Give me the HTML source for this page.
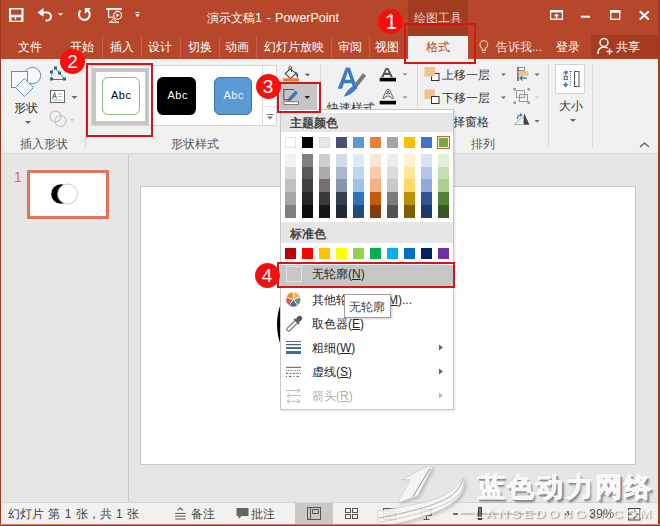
<!DOCTYPE html>
<html><head><meta charset="utf-8">
<style>
*{margin:0;padding:0;box-sizing:border-box}
html,body{width:660px;height:526px;overflow:hidden}
body{position:relative;background:#E6E6E6;font-family:"Liberation Sans",sans-serif;font-size:12px;color:#444}
.a{position:absolute}
svg{position:absolute;overflow:visible}
.t{position:absolute;white-space:nowrap;line-height:1}
.tab{position:absolute;top:41px;color:#fff;font-size:12px;line-height:12px;white-space:nowrap}
.sep{position:absolute;top:36px;width:1px;height:22px;background:#C4614A}
.gsep{position:absolute;top:64px;width:1px;height:84px;background:#DADADA}
.glabel{position:absolute;top:138px;font-size:12px;line-height:12px;color:#555;white-space:nowrap}
.dd{position:absolute;width:0;height:0;border-left:3px solid transparent;border-right:3px solid transparent;border-top:3px solid #666}
.badge{position:absolute;width:25px;height:25px;border-radius:50%;background:#F50F0F;color:#fff;font-size:19px;line-height:26px;text-align:center}
.redbox{position:absolute;border:2px solid #D7141A}
.sw{position:absolute;width:11px;height:11px}
.mi{position:absolute;left:312px;font-size:12px;line-height:12px;color:#262626;white-space:nowrap}
.u{text-decoration:underline}
</style></head><body>

<!-- ============ TITLE BAR ============ -->
<div class="a" style="left:0;top:0;width:660px;height:59px;background:#B7472A"></div>
<div class="a" style="left:408px;top:0;width:60px;height:36px;background:#A13B21"></div>
<div class="t" style="left:414px;top:12px;color:#F0D0C8;font-size:12px">绘图工具</div>
<div class="t" style="left:207px;top:12px;color:#fff;font-size:12px">演示文稿<span style="font-size:12.5px;word-spacing:1px">1 - PowerPoint</span></div>

<!-- QAT icons -->
<svg style="left:0;top:0" width="150" height="36">
  <!-- save -->
  <rect x="9" y="8" width="14.5" height="14" fill="#fff"/>
  <rect x="11" y="9.5" width="10.5" height="5.2" fill="#B7472A"/>
  <rect x="11.5" y="17.3" width="9.5" height="3.4" fill="#B7472A"/>
  <rect x="14.8" y="17.3" width="1.4" height="2.2" fill="#fff"/>
  <!-- undo -->
  <path d="M41.5 12.5 H47 A4 4 0 0 1 47 20.5 H45.5" fill="none" stroke="#fff" stroke-width="2.1"/>
  <path d="M37.5 12.4 L43.5 8 L43.5 16.8 Z" fill="#fff"/>
  <path d="M58 13.3 L63 13.3 L60.5 15.8 Z" fill="#fff"/>
  <!-- repeat -->
  <path d="M80.6 10.6 A5.4 5.4 0 1 0 87.3 10" fill="none" stroke="#fff" stroke-width="2.1"/>
  <path d="M84.8 8.1 L91 8.1 L84.8 14 Z" fill="#fff"/>
  <!-- present -->
  <rect x="106" y="8" width="16" height="1.8" fill="#fff"/>
  <rect x="107.9" y="9" width="1.3" height="8.5" fill="#fff"/>
  <path d="M108 17.2 H113" stroke="#fff" stroke-width="1.1"/>
  <circle cx="117.6" cy="15.3" r="3.9" fill="none" stroke="#fff" stroke-width="1.1"/>
  <path d="M116.3 13.3 L119.6 15.3 L116.3 17.3 Z" fill="#fff"/>
  <path d="M111 21.3 L113.5 18.6 L116 21.3" fill="none" stroke="#fff" stroke-width="1"/>
  <rect x="109" y="21.6" width="10" height="1.3" fill="#fff"/>
  <!-- customize -->
  <path d="M135.5 12.5 H139.5" stroke="#fff" stroke-width="1"/>
  <path d="M135.3 14.2 L139.7 14.2 L137.5 17.3 Z" fill="#fff"/>
</svg>

<!-- window controls -->
<svg style="left:540px;top:0" width="120" height="36">
  <g fill="none" stroke="#fff" stroke-width="1.3">
    <rect x="10.6" y="10.8" width="11.8" height="8.4"/>
  </g>
  <rect x="10" y="10.2" width="13" height="2.2" fill="#fff"/>
  <path d="M16.5 18.8 V15.5" stroke="#fff" stroke-width="1.3"/>
  <path d="M13.8 16.2 L16.5 13.5 L19.2 16.2 Z" fill="#fff"/>
  <path d="M40.8 16.7 H50" stroke="#fff" stroke-width="2"/>
  <rect x="70.7" y="11" width="9" height="8.3" fill="none" stroke="#fff" stroke-width="1.4"/>
  <rect x="70" y="10.3" width="10.4" height="2.4" fill="#fff"/>
  <path d="M99.8 11.2 L108.8 19.4 M108.8 11.2 L99.8 19.4" stroke="#fff" stroke-width="2"/>
</svg>

<!-- ============ TABS ============ -->
<div class="tab" style="left:18px">文件</div>
<div class="sep" style="left:102px"></div>
<div class="tab" style="left:70px">开始</div>
<div class="tab" style="left:110px">插入</div>
<div class="sep" style="left:141px"></div>
<div class="tab" style="left:148px">设计</div>
<div class="sep" style="left:180px"></div>
<div class="tab" style="left:188px">切换</div>
<div class="sep" style="left:219px"></div>
<div class="tab" style="left:225px">动画</div>
<div class="sep" style="left:256px"></div>
<div class="tab" style="left:264px">幻灯片放映</div>
<div class="sep" style="left:331px"></div>
<div class="tab" style="left:338px">审阅</div>
<div class="sep" style="left:369px"></div>
<div class="tab" style="left:375px">视图</div>
<div class="a" style="left:408px;top:36px;width:60px;height:24px;background:#F1F1F1"></div>
<div class="tab" style="left:426px;color:#B7472A">格式</div>
<svg style="left:478px;top:38px" width="16" height="18">
  <path d="M4.3 12.3 V10.6 C2.6 9.6 1.9 8.2 1.9 6.6 A3.9 3.9 0 0 1 9.7 6.6 C9.7 8.2 9 9.6 7.3 10.6 V12.3 Z" fill="none" stroke="#F2C2AE" stroke-width="1.2"/>
  <path d="M4.3 14.5 H7.3" stroke="#F2C2AE" stroke-width="1.3"/>
</svg>
<div class="tab" style="left:496px;color:#F6E1DB">告诉我...</div>
<div class="tab" style="left:556px">登录</div>
<div class="a" style="left:591px;top:35px;width:68px;height:23px;background:#A53C22"></div>
<svg style="left:596px;top:36px" width="18" height="20">
  <circle cx="8" cy="6.5" r="4" fill="none" stroke="#fff" stroke-width="1.4"/>
  <path d="M2 18 C2 13.5 4.5 11 8 11 C9.5 11 10.5 11.5 11.5 12" fill="none" stroke="#fff" stroke-width="1.4"/>
  <path d="M13.5 12.5 V18.5 M10.5 15.5 H16.5" stroke="#fff" stroke-width="1.4"/>
</svg>
<div class="tab" style="left:616px">共享</div>

<!-- ============ RIBBON ============ -->
<div class="a" style="left:0;top:59px;width:660px;height:95px;background:#F1F1F1;border-bottom:1px solid #D5D5D5"></div>
<div class="gsep" style="left:85px"></div>
<div class="gsep" style="left:320px"></div>
<div class="gsep" style="left:417px"></div>
<div class="gsep" style="left:548px"></div>
<div class="gsep" style="left:592px"></div>

<!-- insert shapes group -->
<svg style="left:0;top:59px" width="85" height="80">
  <g fill="#F6F8FB" stroke="#6C8CAE" stroke-width="1">
    <circle cx="32.5" cy="16.5" r="8.2"/>
    <rect x="11.5" y="12.5" width="16" height="16"/>
    <path d="M24.5 19.5 L33.5 28.5 L24.5 37.5 L15.5 28.5 Z"/>
  </g>
  <!-- edit shape -->
  <path d="M55.5 9.5 L51.5 13 L51.5 20" fill="none" stroke="#3D7B88" stroke-width="1" stroke-dasharray="1.3 1.3"/>
  <path d="M51.5 20.5 H64.5" fill="none" stroke="#3D7B88" stroke-width="1"/>
  <path d="M55.5 9.5 L59.5 14 L64.5 20" fill="none" stroke="#3D7B88" stroke-width="1"/>
  <g fill="#2D6A78">
    <rect x="54" y="7.5" width="3" height="3"/><rect x="50" y="11.5" width="3" height="3"/>
    <rect x="50" y="18.5" width="3" height="3"/><rect x="58" y="12.5" width="3" height="3"/>
    <rect x="63" y="18.5" width="3" height="3"/>
  </g>
  <!-- text box -->
  <rect x="50.5" y="31.5" width="14" height="12" fill="#fff" stroke="#666" stroke-width="1"/>
  <path d="M52.5 39.5 L54.5 34 L56.5 39.5 M53.3 37.5 H55.7" fill="none" stroke="#5A7490" stroke-width="1.1"/>
  <path d="M57.5 35 H62.5 M57.5 37.5 H62.5 M52.5 41 H62.5" stroke="#9AA" stroke-width="0.8"/>
  <path d="M71.5 37 L77.5 37 L74.5 40 Z" fill="#666"/>
  <!-- merge -->
  <g fill="none" stroke="#BDBDBD" stroke-width="1.1">
    <circle cx="55.5" cy="57.5" r="5.5"/><circle cx="60.5" cy="62" r="5.5"/>
  </g>
  <path d="M69.5 60 L74.5 60 L72 62.5 Z" fill="#C8C8C8"/>
</svg>
<div class="t" style="left:14px;top:102px;font-size:12px;color:#333">形状</div>
<div class="dd" style="left:24.5px;top:121px"></div>
<div class="glabel" style="left:20px">插入形状</div>

<!-- gallery -->
<div class="a" style="left:91px;top:65px;width:186px;height:61px;background:#fff;border:1px solid #D4D4D4"></div>
<div class="a" style="left:92px;top:68px;width:57px;height:57px;border:4px solid #C6C6C6"></div>
<div class="a" style="left:102px;top:77px;width:38px;height:38px;border:1px solid #8DB573;border-radius:6px;background:#fff"></div>
<div class="t" style="left:111px;top:89.5px;font-size:11px;letter-spacing:0.5px;color:#000">Abc</div>
<div class="a" style="left:157px;top:77px;width:39px;height:38px;border-radius:6px;background:#000"></div>
<div class="t" style="left:167.5px;top:89.5px;font-size:11px;letter-spacing:0.5px;color:#fff">Abc</div>
<div class="a" style="left:214px;top:77px;width:38px;height:38px;border-radius:6px;background:#5B9BD5;border:1px solid #41719C"></div>
<div class="t" style="left:223.5px;top:89.5px;font-size:11px;letter-spacing:0.5px;color:#F0F6FC">Abc</div>
<div class="a" style="left:262px;top:66px;width:1px;height:59px;background:#DADADA"></div>
<div class="a" style="left:263px;top:106px;width:13px;height:1px;background:#E4E4E4"></div>
<svg style="left:263px;top:106px" width="14" height="20">
  <path d="M3.5 8.5 H10.5" stroke="#777" stroke-width="1"/>
  <path d="M4 10.5 L10 10.5 L7 13.5 Z" fill="#777"/>
</svg>
<div class="glabel" style="left:171px">形状样式</div>

<!-- fill / outline buttons -->
<svg style="left:280px;top:62px" width="40" height="50">
  <path d="M10.5 6.8 L15.8 11.6 L10.5 16.4 L5.2 11.6 Z" fill="#fff" stroke="#444" stroke-width="1.1"/>
  <path d="M9 8.5 V5 A1.3 1.3 0 0 1 11.5 5 V10" fill="none" stroke="#555" stroke-width="1"/>
  <path d="M15 10 C17.5 10.5 18.5 12.5 17.5 15.5 L16 12.5" fill="#3B6EA5" stroke="#3B6EA5" stroke-width="1"/>
  <rect x="3" y="16.3" width="16" height="3" fill="#E47B35"/>
  <path d="M24.7 11.8 L30.2 11.8 L27.45 14.2 Z" fill="#555"/>
</svg>
<div class="a" style="left:280px;top:84px;width:37px;height:26px;background:#C5C5C5"></div>
<svg style="left:280px;top:84px" width="37" height="26">
  <path d="M14 5.5 H3.8 V15.8 H8.5" fill="none" stroke="#555" stroke-width="1.1"/>
  <path d="M8 14.5 L15.5 6.5 L18 9 L10.5 17 Z" fill="#3F74B5"/>
  <path d="M8 14.5 L7.2 17.5 L10.5 17 Z" fill="#666"/>
  <rect x="4" y="17.8" width="14.5" height="2.8" fill="#fff" stroke="#666" stroke-width="0.8"/>
  <path d="M24.5 12 L30 12 L27.25 15 Z" fill="#222"/>
</svg>

<!-- quick styles & text fill/outline -->
<svg style="left:320px;top:59px" width="100" height="50">
  <path d="M17.8 29.8 L25.8 8.5 L29.8 8.5 L37.5 29.8 L33.5 29.8 L31.6 24.2 L24 24.2 L22 29.8 Z M25.2 20.8 H30.4 L27.8 12.8 Z" fill="#3C7CC4"/>
  <path d="M44.5 15.5 L35.5 27" stroke="#7A7A7A" stroke-width="4"/>
  <path d="M35.8 26.2 C31 27 26.5 32 23.5 37.8 C29.5 36.5 34 33.5 37 28.5 Z" fill="#3C7CC4"/>
  <!-- text fill A -->
  <path d="M61 18.2 L65.6 9 L68.4 9 L73 18.2 L70.6 18.2 L69.6 16 L64.4 16 L63.4 18.2 Z M65.2 13.8 H68.8 L67 10.5 Z" fill="#555"/>
  <rect x="59.7" y="18.8" width="16.3" height="3.6" fill="#000"/>
  <path d="M82.7 14.5 L87.3 14.5 L85 16.5 Z" fill="#777"/>
  <!-- text outline A -->
  <path d="M62.8 39.3 L67 30.4 L69.3 30.4 L73.5 39.3 L71.5 39.3 L70.6 37.2 L65.7 37.2 L64.8 39.3 Z M66.5 35 H69.8 L68.15 31.8 Z" fill="#fff" stroke="#555" stroke-width="0.9"/>
  <rect x="59.7" y="41.8" width="16.3" height="3.6" fill="#000"/>
  <path d="M82.7 37.5 L87.3 37.5 L85 39.5 Z" fill="#777"/>
</svg>
<div class="t" style="left:327px;top:102px;font-size:12px;color:#333">快速样式</div>

<!-- arrange -->
<svg style="left:417px;top:59px" width="132" height="80">
  <rect x="14.5" y="14.5" width="7.5" height="7" fill="#fff" stroke="#333" stroke-width="1"/>
  <rect x="7.5" y="8" width="10.5" height="9.5" fill="#EDC38A"/>
  <rect x="7.5" y="30.5" width="10.5" height="9.5" fill="#EDC38A"/>
  <rect x="14.5" y="37.5" width="7.5" height="7" fill="#fff" stroke="#333" stroke-width="1"/>
  <path d="M84 14.5 L89 14.5 L86.5 17 Z" fill="#666"/>
  <path d="M84 37.5 L89 37.5 L86.5 40 Z" fill="#666"/>
  <!-- align -->
  <path d="M101 8 V22" stroke="#444" stroke-width="1.3"/>
  <rect x="101.5" y="8.5" width="6" height="3" fill="#fff" stroke="#777" stroke-width="0.8"/>
  <rect x="101.5" y="12" width="10" height="4.8" fill="#EDC38A"/>
  <path d="M110 19.2 H103 M105.5 17 L103 19.2 L105.5 21.4" fill="none" stroke="#2F6DB5" stroke-width="1.2"/>
  <path d="M117.5 14.5 L122.5 14.5 L120 17 Z" fill="#666"/>
  <!-- group (disabled) -->
  <g fill="none" stroke="#9A9A9A" stroke-width="1">
    <rect x="99.5" y="31.5" width="8" height="7"/>
    <rect x="102.5" y="35.5" width="8" height="7"/>
  </g>
  <g fill="#9A9A9A">
    <rect x="96.5" y="29" width="2.5" height="2.5"/><rect x="110.5" y="29" width="2.5" height="2.5"/>
    <rect x="96.5" y="42.5" width="2.5" height="2.5"/><rect x="110.5" y="42.5" width="2.5" height="2.5"/>
  </g>
  <path d="M117.5 37.5 L122.5 37.5 L120 40 Z" fill="#CFCFCF"/>
  <!-- rotate -->
  <path d="M97.5 65.5 L106.5 65.5 L106.5 57 Z" fill="none" stroke="#AAA" stroke-width="1"/>
  <path d="M107 65.8 L112.5 65.8 L107 54 Z" fill="#444"/>
  <path d="M100.5 60 C100.5 57.5 101.5 56 103.5 56" fill="none" stroke="#2F6DB5" stroke-width="1.2"/>
  <path d="M103 54 L105.5 56 L103 58 Z" fill="#2F6DB5"/>
  <path d="M117.5 61 L122.5 61 L120 63.5 Z" fill="#666"/>
</svg>
<div class="t" style="left:442px;top:69px;font-size:12px;color:#333">上移一层</div>
<div class="t" style="left:442px;top:92px;font-size:12px;color:#333">下移一层</div>
<div class="t" style="left:441px;top:116px;font-size:12px;color:#333">选择窗格</div>
<div class="glabel" style="left:471px">排列</div>

<!-- size -->
<div class="a" style="left:555px;top:64px;width:30px;height:30px;background:#FDFDFD;border:1px solid #D4D4D4"></div>
<svg style="left:555px;top:64px" width="30" height="30">
  <rect x="19.5" y="7.5" width="4.5" height="15" fill="#fff" stroke="#555" stroke-width="1"/>
  <path d="M15.5 7 V23 M12 7.5 H18" stroke="#888" stroke-width="1" stroke-dasharray="1 1"/>
  <path d="M10.7 6.3 L7.8 9.6 L13.6 9.6 Z M10.7 23.4 L7.8 20.1 L13.6 20.1 Z" fill="#3B79C3"/>
  <path d="M10.7 9.5 V11.3 M10.7 18.3 V20.2" stroke="#3B79C3" stroke-width="1.4"/>
  <rect x="9.2" y="12.3" width="3" height="3.3" fill="none" stroke="#555" stroke-width="1"/>
</svg>
<div class="t" style="left:559px;top:100px;font-size:12px;color:#333">大小</div>
<div class="dd" style="left:570px;top:119px"></div>
<svg style="left:638px;top:141px" width="14" height="8">
  <path d="M2 6 L6.5 2 L11 6" fill="none" stroke="#666" stroke-width="1.5"/>
</svg>

<!-- ============ SLIDE PANE & EDIT AREA ============ -->
<div class="a" style="left:128px;top:154px;width:1px;height:348px;background:#C8C8C8"></div>
<div class="t" style="left:14px;top:169.5px;font-size:14px;color:#D26E56">1</div>
<div class="a" style="left:27px;top:170px;width:82px;height:49px;border:3px solid #E0735A;background:#fff"></div>
<svg style="left:50px;top:184px" width="30" height="22">
  <circle cx="11" cy="10" r="9.8" fill="#000"/>
  <circle cx="17.5" cy="10" r="10" fill="#fff" stroke="#AAA" stroke-width="0.6"/>
</svg>
<div class="a" style="left:140px;top:186px;width:496px;height:279px;background:#fff;border:1px solid #C8C8C8"></div>
<svg style="left:270px;top:290px" width="30" height="70">
  <circle cx="65" cy="34.5" r="58" fill="#000"/>
</svg>

<!-- ============ STATUS BAR ============ -->
<div class="a" style="left:0;top:502px;width:660px;height:24px;background:#F1F1F1;border-top:1px solid #D4D4D4"></div>
<div class="t" style="left:8px;top:508px;font-size:12px;color:#444;word-spacing:1px">幻灯片 第 1 张，共 1 张</div>
<svg style="left:170px;top:503px" width="490" height="21">
  <!-- notes -->
  <path d="M7.5 7.3 L10.2 5 L12.9 7.3" fill="none" stroke="#555" stroke-width="1.1"/>
  <path d="M5.2 10.4 H15.6 M5.2 13.2 H15.6 M5.2 16 H15.6" stroke="#555" stroke-width="1"/>
  <!-- comments -->
  <path d="M66.5 5 H78.5 V13 H71.5 L68.5 16 V13 H66.5 Z" fill="#666"/>
  <!-- normal view highlighted -->
  <rect x="125" y="0" width="38" height="21" fill="#C8C8C8"/>
  <rect x="137.5" y="4.5" width="13" height="12" fill="none" stroke="#555"/>
  <path d="M140.5 4.5 V16.5 M142.5 6.5 H148.5 V10.5 H142.5 Z" fill="none" stroke="#555"/>
  <!-- sorter -->
  <g fill="none" stroke="#555">
    <rect x="175.5" y="5.5" width="5" height="4"/><rect x="182.5" y="5.5" width="5" height="4"/>
    <rect x="175.5" y="11.5" width="5" height="4"/><rect x="182.5" y="11.5" width="5" height="4"/>
  </g>
  <!-- reading -->
  <g fill="none" stroke="#555">
    <rect x="213.5" y="5.5" width="12" height="11"/>
    <path d="M219.5 5.5 V16.5 M215 8 H218 M215 10.5 H218 M215 13 H218 M221 8 H224 M221 10.5 H224 M221 13 H224"/>
  </g>
  <!-- slideshow -->
  <g fill="none" stroke="#555">
    <path d="M250.5 6.5 H262.5 M251.5 6.5 V12.5 H261.5 V6.5 M256.5 12.5 V16.5 M253.5 16.5 H259.5"/>
  </g>
  <!-- zoom -->
  <path d="M283 11 H288" stroke="#444" stroke-width="1.5"/>
  <path d="M291 11 H370" stroke="#999" stroke-width="1"/>
  <rect x="308.5" y="4.5" width="3" height="12" fill="#777" stroke="#444"/>
  <path d="M395 11 H401 M398 8 V14" stroke="#444" stroke-width="1.3"/>
  <!-- fit -->
  <rect x="458.5" y="5.5" width="11.5" height="11.5" fill="none" stroke="#444"/>
  <path d="M464.25 6.5 V9.5 M462.8 8.2 L464.25 9.7 L465.7 8.2 M464.25 16 V13 M462.8 14.3 L464.25 12.8 L465.7 14.3 M459.5 11.25 H462 M468.9 11.25 H466.5" fill="none" stroke="#444" stroke-width="0.9"/>
</svg>
<div class="t" style="left:191px;top:508px;font-size:12px;color:#444">备注</div>
<div class="t" style="left:251px;top:508px;font-size:12px;color:#444">批注</div>

<!-- watermark -->
<svg style="left:380px;top:460px;opacity:.85" width="100" height="66">
  <defs><filter id="sh" x="-30%" y="-30%" width="160%" height="160%"><feGaussianBlur stdDeviation="1.5"/></filter></defs>
  <g fill="#666" opacity="0.35" filter="url(#sh)" transform="translate(2,2)">
    <path d="M21.4 20 L47 6 L53 6.5 L37.6 36 L17.6 43 L30.4 19.5 Z"/>
    <path d="M-2 67 C28 62 60 54 75 41 C83 34 86 26 84 18.5 L82.5 17.5 C77 29 64 37 47.7 41.5 C33 45 16 48 -2 51 Z"/>
  </g>
  <g fill="#F7F7F7" stroke="#B8B8B8" stroke-width="0.6">
    <path d="M21.4 20 L47 6 L53 6.5 L37.6 36 L17.6 43 L30.4 19.5 Z"/>
    <path d="M-2 67 C28 62 60 54 75 41 C83 34 86 26 84 18.5 L82.5 17.5 C77 29 64 37 47.7 41.5 C33 45 16 48 -2 51 Z"/>
  </g>
  <path d="M21.4 20 L30.4 19.5 L17.6 43 Z" fill="#E2E2E2" opacity=".7"/>
  <path d="M50 8.5 L32.8 36.6" stroke="#8A8A8A" stroke-width="1"/>
  <path d="M-1 58 C25 53 56 46 71 36 C77 31 81 26 83 19" fill="none" stroke="#9A9A9A" stroke-width="0.9"/>
  <path d="M-1 62.5 C28 57 60 49 74 39 C80 34 84 28 84 21" fill="none" stroke="#B0B0B0" stroke-width="0.7"/>
</svg>
<div class="t" style="left:477.5px;top:471.5px;font-size:27px;line-height:30px;font-weight:900;color:#F8F8F8;-webkit-text-stroke:1.2px #F8F8F8;text-shadow:1.5px 1.5px 0 #8C8C8C,2.5px 2.5px 2px rgba(0,0,0,.3),-1px -1px 0 #D5D5D5;letter-spacing:2.4px">蓝色动力网络</div>
<div class="t" style="left:474px;top:509px;font-size:11.5px;line-height:10px;font-weight:bold;color:rgba(250,250,250,.8);text-shadow:1px 1px 1px rgba(0,0,0,.3);letter-spacing:2px;transform:scaleX(1.25);transform-origin:0 0">LANSEDONGLI.COM</div>
<div class="t" style="left:589px;top:508px;font-size:12.5px;color:#333;opacity:.85">39%</div>

<!-- ============ MENU ============ -->
<div class="a" style="left:280px;top:109px;width:174px;height:301px;background:#fff;border:1px solid #C6C6C6;box-shadow:1px 1px 2px rgba(0,0,0,.12)"></div>
<div class="a" style="left:281px;top:113px;width:172px;height:19px;background:#E6E6E6"></div>
<div class="t" style="left:290px;top:117px;font-size:12px;font-weight:bold;color:#444">主题颜色</div>
<div class="sw" style="left:285px;top:137px;background:#FFFFFF;border:1px solid #E2E2E2"></div>
<div class="sw" style="left:302px;top:137px;background:#000000"></div>
<div class="sw" style="left:319px;top:137px;background:#E7E6E6;border:1px solid #DADADA"></div>
<div class="sw" style="left:336px;top:137px;background:#44546A"></div>
<div class="sw" style="left:353px;top:137px;background:#5B9BD5"></div>
<div class="sw" style="left:370px;top:137px;background:#ED7D31"></div>
<div class="sw" style="left:387px;top:137px;background:#A5A5A5"></div>
<div class="sw" style="left:404px;top:137px;background:#FFC000"></div>
<div class="sw" style="left:421px;top:137px;background:#4472C4"></div>
<div class="a" style="left:437px;top:136px;width:13px;height:13px;border:1px solid #C8662A;background:#FCE8C4"></div>
<div class="a" style="left:439px;top:138px;width:9px;height:9px;background:#70AD47"></div>
<div class="a" style="left:285px;top:154px;width:11px;height:13px;background:#F2F2F2"></div>
<div class="a" style="left:285px;top:167px;width:11px;height:13px;background:#D9D9D9"></div>
<div class="a" style="left:285px;top:179px;width:11px;height:13px;background:#BFBFBF"></div>
<div class="a" style="left:285px;top:192px;width:11px;height:13px;background:#A6A6A6"></div>
<div class="a" style="left:285px;top:205px;width:11px;height:13px;background:#808080"></div>
<div class="a" style="left:302px;top:154px;width:11px;height:13px;background:#808080"></div>
<div class="a" style="left:302px;top:167px;width:11px;height:13px;background:#595959"></div>
<div class="a" style="left:302px;top:179px;width:11px;height:13px;background:#404040"></div>
<div class="a" style="left:302px;top:192px;width:11px;height:13px;background:#262626"></div>
<div class="a" style="left:302px;top:205px;width:11px;height:13px;background:#0D0D0D"></div>
<div class="a" style="left:319px;top:154px;width:11px;height:13px;background:#D0CECE"></div>
<div class="a" style="left:319px;top:167px;width:11px;height:13px;background:#AEAAAA"></div>
<div class="a" style="left:319px;top:179px;width:11px;height:13px;background:#757171"></div>
<div class="a" style="left:319px;top:192px;width:11px;height:13px;background:#3A3838"></div>
<div class="a" style="left:319px;top:205px;width:11px;height:13px;background:#161616"></div>
<div class="a" style="left:336px;top:154px;width:11px;height:13px;background:#D6DCE5"></div>
<div class="a" style="left:336px;top:167px;width:11px;height:13px;background:#ADB9CA"></div>
<div class="a" style="left:336px;top:179px;width:11px;height:13px;background:#8497B0"></div>
<div class="a" style="left:336px;top:192px;width:11px;height:13px;background:#333F50"></div>
<div class="a" style="left:336px;top:205px;width:11px;height:13px;background:#222A35"></div>
<div class="a" style="left:353px;top:154px;width:11px;height:13px;background:#DEEBF7"></div>
<div class="a" style="left:353px;top:167px;width:11px;height:13px;background:#BDD7EE"></div>
<div class="a" style="left:353px;top:179px;width:11px;height:13px;background:#9DC3E6"></div>
<div class="a" style="left:353px;top:192px;width:11px;height:13px;background:#2E75B6"></div>
<div class="a" style="left:353px;top:205px;width:11px;height:13px;background:#1F4E79"></div>
<div class="a" style="left:370px;top:154px;width:11px;height:13px;background:#FBE5D6"></div>
<div class="a" style="left:370px;top:167px;width:11px;height:13px;background:#F8CBAD"></div>
<div class="a" style="left:370px;top:179px;width:11px;height:13px;background:#F4B183"></div>
<div class="a" style="left:370px;top:192px;width:11px;height:13px;background:#C55A11"></div>
<div class="a" style="left:370px;top:205px;width:11px;height:13px;background:#843C0C"></div>
<div class="a" style="left:387px;top:154px;width:11px;height:13px;background:#EDEDED"></div>
<div class="a" style="left:387px;top:167px;width:11px;height:13px;background:#DBDBDB"></div>
<div class="a" style="left:387px;top:179px;width:11px;height:13px;background:#C9C9C9"></div>
<div class="a" style="left:387px;top:192px;width:11px;height:13px;background:#7B7B7B"></div>
<div class="a" style="left:387px;top:205px;width:11px;height:13px;background:#525252"></div>
<div class="a" style="left:404px;top:154px;width:11px;height:13px;background:#FFF2CC"></div>
<div class="a" style="left:404px;top:167px;width:11px;height:13px;background:#FFE699"></div>
<div class="a" style="left:404px;top:179px;width:11px;height:13px;background:#FFD966"></div>
<div class="a" style="left:404px;top:192px;width:11px;height:13px;background:#BF9000"></div>
<div class="a" style="left:404px;top:205px;width:11px;height:13px;background:#7F6000"></div>
<div class="a" style="left:421px;top:154px;width:11px;height:13px;background:#DAE3F3"></div>
<div class="a" style="left:421px;top:167px;width:11px;height:13px;background:#B4C7E7"></div>
<div class="a" style="left:421px;top:179px;width:11px;height:13px;background:#8FAADC"></div>
<div class="a" style="left:421px;top:192px;width:11px;height:13px;background:#2F5597"></div>
<div class="a" style="left:421px;top:205px;width:11px;height:13px;background:#203864"></div>
<div class="a" style="left:438px;top:154px;width:11px;height:13px;background:#E2F0D9"></div>
<div class="a" style="left:438px;top:167px;width:11px;height:13px;background:#C5E0B4"></div>
<div class="a" style="left:438px;top:179px;width:11px;height:13px;background:#A9D18E"></div>
<div class="a" style="left:438px;top:192px;width:11px;height:13px;background:#548235"></div>
<div class="a" style="left:438px;top:205px;width:11px;height:13px;background:#385723"></div>
<div class="sw" style="left:285px;top:248px;background:#C00000"></div>
<div class="sw" style="left:302px;top:248px;background:#FF0000"></div>
<div class="sw" style="left:319px;top:248px;background:#FFC000"></div>
<div class="sw" style="left:336px;top:248px;background:#FFFF00"></div>
<div class="sw" style="left:353px;top:248px;background:#92D050"></div>
<div class="sw" style="left:370px;top:248px;background:#00B050"></div>
<div class="sw" style="left:387px;top:248px;background:#00B0F0"></div>
<div class="sw" style="left:404px;top:248px;background:#0070C0"></div>
<div class="sw" style="left:421px;top:248px;background:#002060"></div>
<div class="sw" style="left:438px;top:248px;background:#7030A0"></div>
<div class="a" style="left:281px;top:222px;width:172px;height:21px;background:#E6E6E6"></div>
<div class="t" style="left:290px;top:228px;font-size:12px;font-weight:bold;color:#444">标准色</div>
<div class="a" style="left:281px;top:265px;width:172px;height:21px;background:#C6C6C6"></div>
<div class="a" style="left:286px;top:266px;width:16px;height:16px;border:1px solid #E4E4E4"></div>
<div class="mi" style="top:268px">无轮廓(<span class="u">N</span>)</div>
<div class="mi" style="top:294px">其他轮廓颜色(<span class="u">M</span>)...</div>
<div class="mi" style="top:318px">取色器(<span class="u">E</span>)</div>
<div class="mi" style="top:342px">粗细(<span class="u">W</span>)</div>
<div class="mi" style="top:366px">虚线(<span class="u">S</span>)</div>
<div class="mi" style="top:390px;color:#B0B0B0">箭头(<span class="u">R</span>)</div>
<svg style="left:280px;top:285px" width="174" height="125">
  <!-- color wheel -->
  <path d="M13.3 14.5 L13.30 7.10 A7.4 7.4 0 0 1 20.34 12.21 Z" fill="#EDB463" stroke="#fff" stroke-width="0.7"/>
  <path d="M13.3 14.5 L20.34 12.21 A7.4 7.4 0 0 1 17.65 20.49 Z" fill="#5E9C6A" stroke="#fff" stroke-width="0.7"/>
  <path d="M13.3 14.5 L17.65 20.49 A7.4 7.4 0 0 1 8.95 20.49 Z" fill="#4A62B2" stroke="#fff" stroke-width="0.7"/>
  <path d="M13.3 14.5 L8.95 20.49 A7.4 7.4 0 0 1 6.26 12.21 Z" fill="#D45A3E" stroke="#fff" stroke-width="0.7"/>
  <path d="M13.3 14.5 L6.26 12.21 A7.4 7.4 0 0 1 13.30 7.10 Z" fill="#E88A38" stroke="#fff" stroke-width="0.7"/>
  <!-- eyedropper -->
  <g transform="translate(7.5,45.5) rotate(-45)">
    <rect x="0" y="-1.8" width="13" height="3.6" rx="1.5" fill="#fff" stroke="#666" stroke-width="1"/>
    <path d="M13 -3.6 V3.6" stroke="#555" stroke-width="1.6"/>
    <ellipse cx="16.5" cy="0" rx="3.2" ry="2.6" fill="#5A5A5A"/>
  </g>
  <!-- weights -->
  <path d="M6 56.5 H21" stroke="#4A5A70" stroke-width="0.9"/>
  <path d="M6 59.6 H21" stroke="#44618A" stroke-width="1.3"/>
  <path d="M6 63 H21" stroke="#3F6CA5" stroke-width="2"/>
  <path d="M6 67.5 H21" stroke="#3F6CA5" stroke-width="3"/>
  <!-- dashes -->
  <path d="M6 82.3 H21" stroke="#555" stroke-width="1"/>
  <path d="M6 85.4 H21" stroke="#555" stroke-width="1" stroke-dasharray="1 1.2"/>
  <path d="M6 88.3 H21" stroke="#555" stroke-width="1" stroke-dasharray="2.2 1.3"/>
  <path d="M6 91.4 H21" stroke="#555" stroke-width="1" stroke-dasharray="1 2 2.5 2"/>
  <!-- arrows disabled -->
  <path d="M6 105.6 H20 M17.5 103.6 L20 105.6 L17.5 107.6" fill="none" stroke="#BBB" stroke-width="1"/>
  <path d="M21 110.6 H7 M9.5 108.6 L7 110.6 L9.5 112.6" fill="none" stroke="#BBB" stroke-width="1"/>
  <path d="M7 116.4 H20 M9.5 114.4 L7 116.4 L9.5 118.4 M17.5 114.4 L20 116.4 L17.5 118.4" fill="none" stroke="#BBB" stroke-width="1"/>
  <!-- submenu arrows -->
  <path d="M159 59.5 L163 62.5 L159 65.5 Z" fill="#666"/>
  <path d="M159 83.5 L163 86.5 L159 89.5 Z" fill="#666"/>
  <path d="M159 107.5 L163 110.5 L159 113.5 Z" fill="#BBB"/>
</svg>
<!-- tooltip -->
<div class="a" style="left:344px;top:294px;width:47px;height:24px;background:#fff;border:1px solid #A0A0A0;box-shadow:1px 1px 2px rgba(0,0,0,.2)"></div>
<div class="t" style="left:349px;top:301px;font-size:12px;color:#444">无轮廓</div>

<!-- ============ WINDOW BORDER ============ -->
<div class="a" style="left:0;top:0;width:1px;height:526px;background:#A33A20"></div>
<div class="a" style="left:658px;top:0;width:2px;height:526px;background:#A33A20"></div>
<div class="a" style="left:0;top:524px;width:660px;height:1px;background:#C88270"></div>
<div class="a" style="left:0;top:525px;width:660px;height:1px;background:#A33A20"></div>

<!-- ============ ANNOTATIONS ============ -->
<div class="redbox" style="left:404px;top:23px;width:72px;height:41px"></div>
<div class="badge" style="left:378px;top:8.5px"></div>
<svg style="left:378px;top:8.5px" width="25" height="25"><path d="M13.5 5.8 V19.2" stroke="#fff" stroke-width="2.1"/><path d="M13.6 5.6 L8.8 8.8" stroke="#fff" stroke-width="1.8"/><path d="M9.5 19 H17.8" stroke="#fff" stroke-width="1.8"/></svg>
<div class="redbox" style="left:86px;top:63px;width:67px;height:74px"></div>
<div class="badge" style="left:60px;top:49px">2</div>
<div class="redbox" style="left:277px;top:82px;width:44px;height:31px"></div>
<div class="badge" style="left:255.5px;top:74px">3</div>
<div class="redbox" style="left:277px;top:262px;width:178px;height:26px"></div>
<div class="badge" style="left:254.5px;top:263px">4</div>

</body></html>
